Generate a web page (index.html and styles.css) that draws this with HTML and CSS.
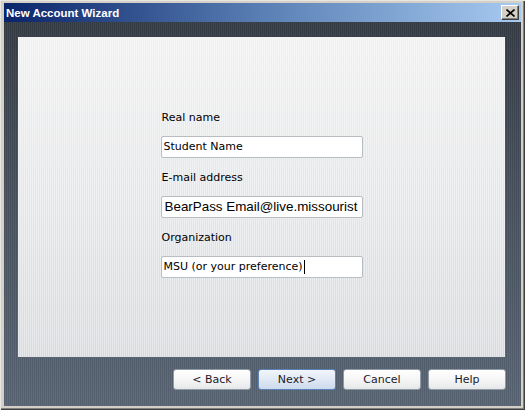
FILE: index.html
```html
<!DOCTYPE html>
<html>
<head>
<meta charset="utf-8">
<link rel="stylesheet" href="styles.css">
</head>
<body>
<div class="window">
  <div class="titlebar">
    <span class="title">New Account Wizard</span>
    <span class="close">
      <svg width="9" height="8" viewBox="0 0 9 8"><path d="M0.5 0.5 L8.5 7.5 M8.5 0.5 L0.5 7.5" stroke="#000" stroke-width="1.6" fill="none"/></svg>
    </span>
  </div>
  <div class="body">
    <div class="panel">
      <div class="form">
        <div class="group">
          <div class="label">Real name</div>
          <div class="input">Student Name</div>
        </div>
        <div class="group">
          <div class="label">E-mail address</div>
          <div class="input big">BearPass Email@live.missourist</div>
        </div>
        <div class="group">
          <div class="label">Organization</div>
          <div class="input">MSU (or your preference)<span class="caret"></span></div>
        </div>
      </div>
    </div>
    <div class="buttons">
      <div class="btn">&lt; Back</div>
      <div class="btn default">Next &gt;</div>
      <div class="btn">Cancel</div>
      <div class="btn">Help</div>
    </div>
  </div>
</div>
</body>
</html>
```

FILE: styles.css
```css
html, body {
  margin: 0;
  padding: 0;
  background: #d4d0c8;
}
.window {
  width: 525px;
  height: 410px;
  box-sizing: border-box;
  background: #d4d0c8;
  padding: 3px 4px 4px 4px;
  box-shadow: inset 1px 1px 0 #e8e6e0, inset -1px -1px 0 #404040, inset -2px -2px 0 #808080;
  display: flex;
  flex-direction: column;
  font-family: "DejaVu Sans", "Liberation Sans", sans-serif;
}
.titlebar {
  height: 19px;
  flex: none;
  background: linear-gradient(90deg, #0a246a 0%, #5a7fb4 50%, #a6caf0 100%);
  display: flex;
  align-items: center;
  justify-content: space-between;
  padding: 0 2px 0 2px;
}
.title {
  color: #fff;
  font-family: "Liberation Sans", Arial, sans-serif;
  font-weight: bold;
  font-size: 11.5px;
}
.close {
  width: 18px;
  height: 15px;
  box-sizing: border-box;
  background: #d4d0c8;
  border-top: 1px solid #fff;
  border-left: 1px solid #fff;
  border-right: 1px solid #404040;
  border-bottom: 1px solid #404040;
  box-shadow: inset -1px -1px 0 #808080;
  display: flex;
  align-items: center;
  justify-content: center;
}
.close svg { display: block; }
.body {
  flex: 1;
  display: flex;
  flex-direction: column;
  padding: 15px 16px 16px 14px;
  background:
    repeating-linear-gradient(90deg, rgba(0,0,0,0.07) 0 1px, rgba(255,255,255,0.03) 1px 2px),
    linear-gradient(180deg, #383f48 0%, #4a5461 45%, #5c6878 100%);
}
.panel {
  height: 320px;
  flex: none;
  display: flex;
  justify-content: center;
  background:
    repeating-linear-gradient(90deg, rgba(255,255,255,0.35) 0 1px, rgba(0,0,0,0.015) 1px 2px),
    linear-gradient(180deg, #f3f3f3 0%, #e6e8ea 55%, #dadde1 100%);
}
.form {
  width: 202px;
  padding-top: 74px;
  display: flex;
  flex-direction: column;
}
.group {
  display: flex;
  flex-direction: column;
  margin-bottom: 13px;
}
.label {
  height: 14px;
  line-height: 14px;
  font-size: 11px;
  color: #000;
  padding-left: 1px;
  margin-bottom: 11px;
}
.input {
  height: 22px;
  box-sizing: border-box;
  background: #fff;
  border: 1px solid #b9bdc2;
  border-radius: 2px;
  font-size: 11px;
  line-height: 20px;
  padding-left: 2px;
  color: #000;
  white-space: nowrap;
  overflow: hidden;
  display: flex;
  align-items: center;
}
.input.big {
  font-family: "Liberation Sans", Arial, sans-serif;
  font-size: 13.4px;
  padding-left: 3px;
}
.caret {
  display: inline-block;
  width: 1px;
  height: 14px;
  background: #000;
  margin-left: 1px;
}
.buttons {
  margin-top: 12px;
  display: flex;
  justify-content: flex-end;
  gap: 7px;
  margin-right: -1px;
}
.btn {
  width: 78px;
  height: 21px;
  box-sizing: border-box;
  border: 1px solid #8e9aa6;
  border-radius: 3px;
  background: linear-gradient(180deg, #ffffff 0%, #f6f6f6 50%, #e6e7e9 100%);
  font-size: 11px;
  display: flex;
  align-items: center;
  justify-content: center;
  color: #1a1a2a;
}
.btn.default {
  border: 1px solid #5d82b6;
  background: linear-gradient(180deg, #f2f6fb 0%, #e0e9f4 50%, #cddbee 100%);
}
```
